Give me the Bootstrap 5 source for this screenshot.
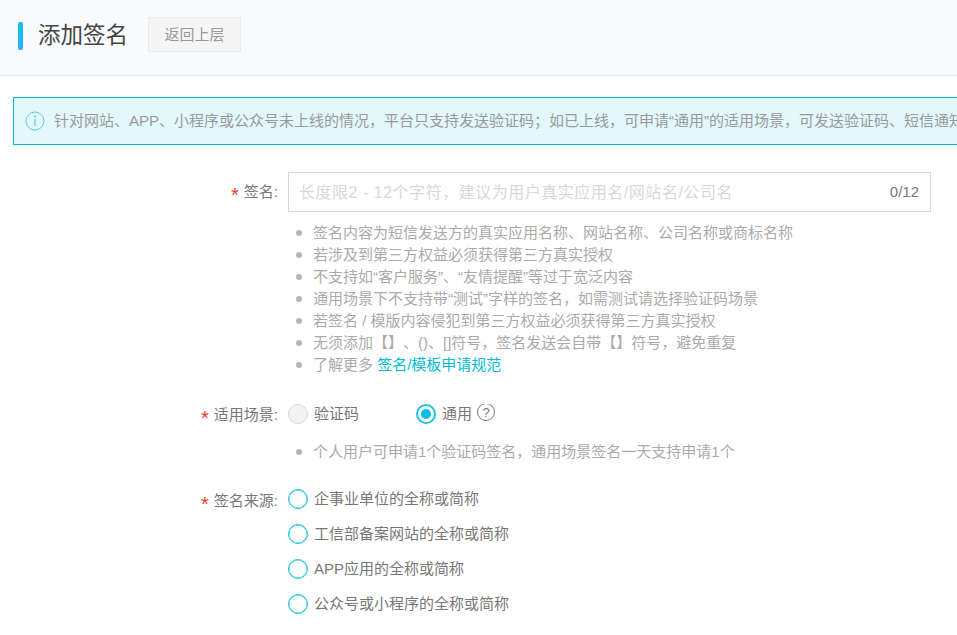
<!DOCTYPE html>
<html lang="zh"><head><meta charset="utf-8"><title>添加签名</title>
<link href="https://cdn.jsdelivr.net/npm/bootstrap@5.3.0/dist/css/bootstrap.min.css" rel="stylesheet">
<style>
html,body{height:635px;overflow:hidden}
body{font-family:"Liberation Sans","Noto Sans CJK SC",sans-serif;font-size:15px;color:#666;background:#fff;text-spacing-trim:space-all}
.page-head{height:76px;background:#f9fafc;border-bottom:1px solid #ebebeb;padding-left:18px}
.head-bar{width:5px;height:28px;border-radius:2px;background:linear-gradient(#0cc4e6,#2db0fb);margin-right:15px;margin-bottom:3px}
.head-title{font-size:22.5px;font-weight:400;color:#444;margin:0 20px 4px 0;line-height:32px}
.back-btn{width:93px;height:35px;background:#f5f5f5;border:1px solid #ebebeb;color:#999;font-size:15px;border-radius:0;padding:0;line-height:33px;text-align:center;margin-bottom:6px}
.notice{margin:21px 0 0 13px;width:1100px;height:48px;background:#e3f8fd;border:1px solid #00bcd4;padding-left:11px;white-space:nowrap;color:#999;font-size:15px}
.notice svg{margin-right:9px;flex:none}
.form-zone{padding-top:27px}
.field{display:flex}
.field-label{width:278px;flex:none;text-align:right;color:#777;font-size:15px;line-height:22px}
.star{color:#e8421f;margin-right:5px;font-size:20px;line-height:1;vertical-align:-5px}
.field-body{margin-left:10px;flex:none;width:643px}
.sign-input{height:40px;border:1px solid #d9d9d9;padding:0 11px 0 10px;color:#777}
.hold{color:#d8d8d8;font-size:16px;letter-spacing:.52px;padding-top:1px}
.tips{list-style:none;margin:10px 0 0;padding:0 0 0 25px;color:#aaa;font-size:15px;line-height:22px}
.tips li{position:relative}
.tips li::before{content:"";position:absolute;left:-17px;top:8px;width:6px;height:6px;border-radius:50%;background:#b5b5b5}
.tips a{color:#00bcd4;text-decoration:none}
.opt{display:flex;align-items:center;color:#777;white-space:nowrap;font-size:15px;height:20px}
.dot{width:20px;height:20px;border-radius:50%;border:1px solid #1dc5de;box-shadow:inset 0 0 0 .4px #1dc5de;background:#fff;margin-right:6px;flex:none;display:flex;align-items:center;justify-content:center}
.dot.off{background:#f3f3f3;border-color:#d9d9d9;box-shadow:none}
.dot.on{border-width:2px;box-shadow:none}
.dot.on::after{content:"";width:10px;height:10px;border-radius:50%;background:#00bfe0}
.scene-row{margin-top:28px}
.scene-opts{gap:57px;height:20px}
.origin-row{margin-top:26px}
.origin-list{display:flex;flex-direction:column;gap:15px}
.label-low{padding-top:1px}
.scene-tips{margin-top:17px}
.sign-label{padding-top:9px}
</style></head>
<body>
<header class="page-head d-flex align-items-center">
  <span class="head-bar"></span>
  <h1 class="head-title">添加签名</h1>
  <button type="button" class="btn back-btn">返回上层</button>
</header>
<div class="notice d-flex align-items-center">
  <svg width="20" height="20" viewBox="0 0 20 20"><circle cx="10" cy="10" r="9" fill="none" stroke="#5cc9ec" stroke-width="1"/><circle cx="10" cy="5.6" r="1" fill="#5cc9ec"/><rect x="9.4" y="8" width="1.2" height="7" fill="#5cc9ec"/></svg>
  <span>针对网站、APP、小程序或公众号未上线的情况，平台只支持发送验证码；如已上线，可申请“通用”的适用场景，可发送验证码、短信通知</span>
</div>
<main class="form-zone">
  <div class="field">
    <div class="field-label sign-label"><span class="star">*</span>签名:</div>
    <div class="field-body">
      <div class="sign-input d-flex align-items-center justify-content-between"><span class="hold">长度限2 - 12个字符，建议为用户真实应用名/网站名/公司名</span><span>0/12</span></div>
      <ul class="tips">
        <li>签名内容为短信发送方的真实应用名称、网站名称、公司名称或商标名称</li>
        <li>若涉及到第三方权益必须获得第三方真实授权</li>
        <li>不支持如“客户服务”、“友情提醒”等过于宽泛内容</li>
        <li>通用场景下不支持带“测试”字样的签名，如需测试请选择验证码场景</li>
        <li>若签名 / 模版内容侵犯到第三方权益必须获得第三方真实授权</li>
        <li>无须添加【】、()、[]符号，签名发送会自带【】符号，避免重复</li>
        <li>了解更多 <a href="#">签名/模板申请规范</a></li>
      </ul>
    </div>
  </div>
  <div class="field scene-row">
    <div class="field-label"><span class="star">*</span>适用场景:</div>
    <div class="field-body">
      <div class="d-flex scene-opts">
        <div class="opt"><span class="dot off"></span>验证码</div>
        <div class="opt"><span class="dot on"></span>通用
          <svg class="ms-1" width="20" height="20" viewBox="0 0 20 20"><circle cx="10" cy="8" r="8.5" fill="none" stroke="#777" stroke-width="1"/><text x="10" y="12.8" text-anchor="middle" font-size="13" fill="#777" font-family="Liberation Sans">?</text></svg>
        </div>
      </div>
      <ul class="tips scene-tips"><li>个人用户可申请1个验证码签名，通用场景签名一天支持申请1个</li></ul>
    </div>
  </div>
  <div class="field origin-row">
    <div class="field-label label-low"><span class="star">*</span>签名来源:</div>
    <div class="field-body origin-list">
      <div class="opt"><span class="dot"></span>企事业单位的全称或简称</div>
      <div class="opt"><span class="dot"></span>工信部备案网站的全称或简称</div>
      <div class="opt"><span class="dot"></span>APP应用的全称或简称</div>
      <div class="opt"><span class="dot"></span>公众号或小程序的全称或简称</div>
    </div>
  </div>
</main>
<script src="https://cdn.jsdelivr.net/npm/bootstrap@5.3.0/dist/js/bootstrap.bundle.min.js"></script>
</body></html>
